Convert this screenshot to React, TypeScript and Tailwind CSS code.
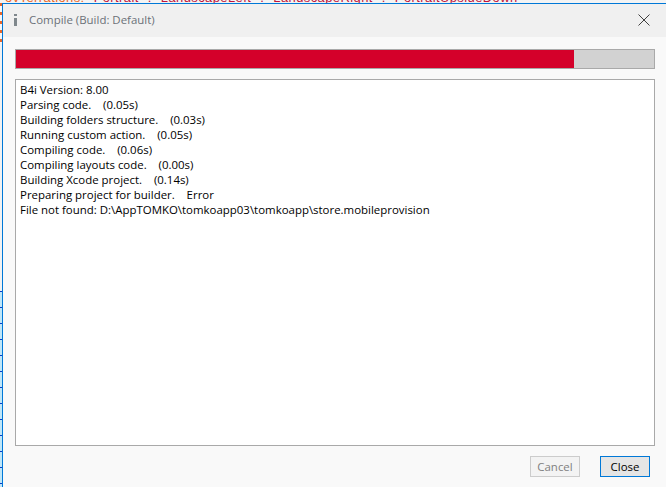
const logLines = [
  'B4i Version: 8.00',
  'Parsing code.    (0.05s)',
  'Building folders structure.    (0.03s)',
  'Running custom action.    (0.05s)',
  'Compiling code.    (0.06s)',
  'Compiling layouts code.    (0.00s)',
  'Building Xcode project.    (0.14s)',
  'Preparing project for builder.    Error',
  'File not found: D:\\AppTOMKO\\tomkoapp03\\tomkoapp\\store.mobileprovision',
];

export default function App() {
  return (
    <div className="w-[666px] h-[487px] overflow-hidden bg-white font-['Open_Sans',sans-serif] text-[11.45px]">
      {/* Code editor peeking out behind the dialog */}
      <div className="h-[3px] overflow-hidden pl-[5px] bg-[#f4f4f4]">
        <div className="-mt-[10px] flex gap-[9px] h-[16px] leading-[16px] whitespace-pre font-['Liberation_Sans',sans-serif] text-[13px] tracking-[0.4px] text-[#c0143c]">
          <span className="text-[#e8672a]">ovTerrations:</span>
          <span>Portrait</span>
          <span>.</span>
          <span>LandscapeLeft</span>
          <span>.</span>
          <span>LandscapeRight</span>
          <span>.</span>
          <span>PortraitUpsideDown</span>
        </div>
      </div>

      <div className="flex h-[484px]">
        {/* Editor gutter behind the dialog */}
        <div className="w-[2px] flex flex-col bg-[#f2f2f2]">
          <div className="h-[40px] bg-[repeating-linear-gradient(to_bottom,#e8672a_0px,#e8672a_3px,#f7f7f7_3px,#f7f7f7_9px)]" />
          <div className="h-[248px]" />
          <div className="flex-1 bg-[repeating-linear-gradient(to_bottom,#0a3cc8_0px,#0a3cc8_1px,#bfe6f8_1px,#bfe6f8_16px)]" />
        </div>

        {/* Dialog */}
        <div className="flex-1 flex flex-col border-l border-t border-[#0078d7] bg-[#f9f9f9]">
          <div className="h-[33px] pb-[2px] flex items-center bg-[#f0f0f0] text-[#6b7078]">
            <div className="w-[26px] pl-[11px]">
              <svg className="block" width="3" height="12" viewBox="0 0 3 12" fill="#7f878c">
                <rect x="0" y="0" width="3" height="2" />
                <rect x="0" y="4" width="3" height="8" />
              </svg>
            </div>
            <span>Compile (Build: Default)</span>
            <svg className="ml-auto mr-[16px]" width="12" height="12" viewBox="0 0 12 12" fill="none" stroke="#404040" strokeWidth="1">
              <path d="M0.5 0.5 L11.5 11.5 M11.5 0.5 L0.5 11.5" />
            </svg>
          </div>

          <div className="flex-1 flex flex-col pl-[12px] pr-[11px] pt-[12px]">
            {/* Progress */}
            <div className="h-[20px] border border-[#a9a9a9] bg-[#d2d2d2]">
              <div className="h-full w-[558px] bg-[#d4002a]" />
            </div>

            {/* Log */}
            <div className="mt-[10px] h-[367px] border border-[#a9a9a9] bg-white px-[4px] pt-[2px] text-black leading-[15px] whitespace-pre">
              {logLines.map((line) => (
                <div key={line}>{line}</div>
              ))}
            </div>

            <div className="mt-[10px] flex justify-end gap-[20px] pr-[5px]">
              <button className="w-[50px] h-[21px] border border-[#cccccc] bg-[#f3f3f3] text-[#808080]">Cancel</button>
              <button className="w-[50px] h-[21px] border border-[#0078d7] bg-[#e5e5e5] text-black">Close</button>
            </div>
          </div>
        </div>
      </div>
    </div>
  );
}
